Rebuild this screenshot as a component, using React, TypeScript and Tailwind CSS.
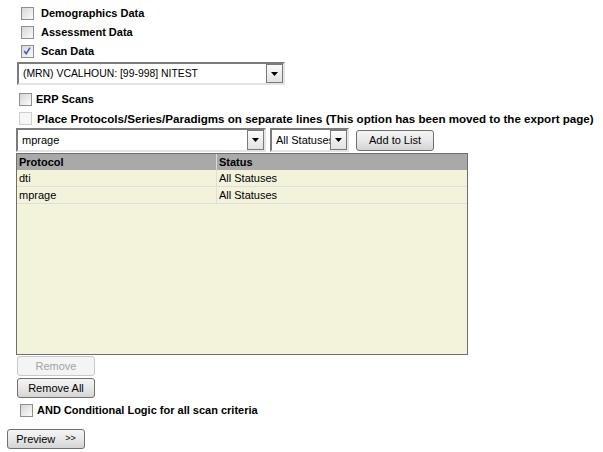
import { ReactNode } from 'react';

function Box({ checked = false, disabled = false }: { checked?: boolean; disabled?: boolean }) {
    return (
        <span
            className={
                'relative inline-block w-[13px] h-[13px] border shrink-0 ' +
                (disabled
                    ? 'border-[#cfcfcf] bg-[#f6f6f6]'
                    : 'border-[#8f8f8f] bg-gradient-to-br from-[#d6d6d6] to-[#fbfbfb]')
            }
        >
            {checked && (
                <svg viewBox="0 0 13 13" className="absolute left-0 top-0 w-[11px] h-[11px]">
                    <path d="M2.5 6 L5 9 L9.5 2" stroke="#3a5ab8" strokeWidth="1.8" fill="none" />
                </svg>
            )}
        </span>
    );
}

function Check({
    label,
    checked,
    disabled,
    className,
    textClass = 'text-[11px]'
}: {
    label: string;
    checked?: boolean;
    disabled?: boolean;
    className: string;
    textClass?: string;
}) {
    return (
        <div className={'flex items-center ' + className}>
            <Box checked={checked} disabled={disabled} />
            <span className={'font-bold text-black leading-none whitespace-nowrap ' + textClass}>{label}</span>
        </div>
    );
}

function Select({ value, className, textClass = 'text-[11px] pl-[4px]' }: { value: string; className: string; textClass?: string }) {
    return (
        <div
            className={
                'flex items-stretch bg-white border-2 border-t-[#7c7c7c] border-l-[#7c7c7c] border-r-[#e4e4e4] border-b-[#e4e4e4] overflow-hidden ' +
                className
            }
        >
            <span className={'flex-1 min-w-0 flex items-center text-black overflow-hidden whitespace-nowrap ' + textClass}>
                {value}
            </span>
            <span className="w-[17px] shrink-0 flex items-center justify-center bg-gradient-to-b from-[#fafafa] to-[#e2e2e2] border border-[#7a7a7a]">
                <svg viewBox="0 0 7 4" className="w-[7px] h-[4px]">
                    <path d="M0 0 H7 L3.5 4 Z" fill="#000" />
                </svg>
            </span>
        </div>
    );
}

function Button({ children, className, disabled }: { children: ReactNode; className: string; disabled?: boolean }) {
    return (
        <div
            className={
                'flex items-center justify-center rounded-[3px] border text-[11px] ' +
                (disabled
                    ? 'border-[#c9c9c9] bg-[#f4f4f4] text-[#a3a3a3]'
                    : 'border-[#707070] bg-gradient-to-b from-[#f4f4f4] via-[#e8e8e8] to-[#d4d4d4] text-black') +
                ' ' +
                className
            }
        >
            {children}
        </div>
    );
}

const rows = [
    { protocol: 'dti', status: 'All Statuses' },
    { protocol: 'mprage', status: 'All Statuses' }
];

export default function App() {
    return (
        <div className="w-[603px] h-[452px] bg-white font-['Liberation_Sans',Arial,sans-serif] relative">
            <div className="flex flex-col pt-[4px]">
                <Check label="Demographics Data" className="h-[19px] pl-[21px] gap-[7px]" />
                <Check label="Assessment Data" className="h-[19px] pl-[21px] gap-[7px]" />
                <Check label="Scan Data" checked className="h-[19px] pl-[21px] gap-[7px]" />

                <Select
                    value="(MRN) VCALHOUN: [99-998] NITEST"
                    textClass="text-[10.4px] pl-[4px]"
                    className="ml-[17px] mt-[1px] w-[268px] h-[23px]"
                />

                <Check label="ERP Scans" className="h-[19px] pl-[19px] gap-[4px] mt-[5px]" />
                <Check
                    label="Place Protocols/Series/Paradigms on separate lines (This option has been moved to the export page)"
                    disabled
                    textClass="text-[11.6px]"
                    className="h-[19px] pl-[19px] gap-[5px]"
                />

                <div className="flex items-center ml-[16px] h-[24px]">
                    <Select value="mprage" className="w-[250px] h-[24px]" />
                    <Select value="All Statuses" textClass="text-[11px] pl-[4px]" className="ml-[4px] w-[79px] h-[24px]" />
                    <Button className="ml-[7px] w-[78px] h-[21px]">Add to List</Button>
                </div>

                <div className="ml-[16px] mt-[1px] w-[452px] h-[202px] border border-[#6e6e6e] bg-[#f3f3dc] text-[11px]">
                    <div className="flex h-[16px] bg-[#a9a9a9] font-bold items-center">
                        <span className="w-[200px] pl-[2px] border-r border-[#dadada] h-full flex items-center">Protocol</span>
                        <span className="pl-[2px]">Status</span>
                    </div>
                    {rows.map(r => (
                        <div key={r.protocol} className="flex h-[17px] items-center border-b border-[#dedede]">
                            <span className="w-[200px] pl-[2px] border-r border-[#dedede] h-full flex items-center">{r.protocol}</span>
                            <span className="pl-[2px]">{r.status}</span>
                        </div>
                    ))}
                </div>

                <Button disabled className="ml-[17px] mt-[1px] w-[78px] h-[20px]">Remove</Button>
                <Button className="ml-[17px] mt-[2px] w-[78px] h-[20px]">Remove All</Button>

                <Check label="AND Conditional Logic for all scan criteria" className="h-[19px] pl-[20px] gap-[4px] mt-[3px]" />

                <Button className="ml-[7px] mt-[9px] w-[78px] h-[20px]">
                    <span>Preview</span>
                    <span className="ml-[10px] text-[9px]">&gt;&gt;</span>
                </Button>
            </div>
        </div>
    );
}
